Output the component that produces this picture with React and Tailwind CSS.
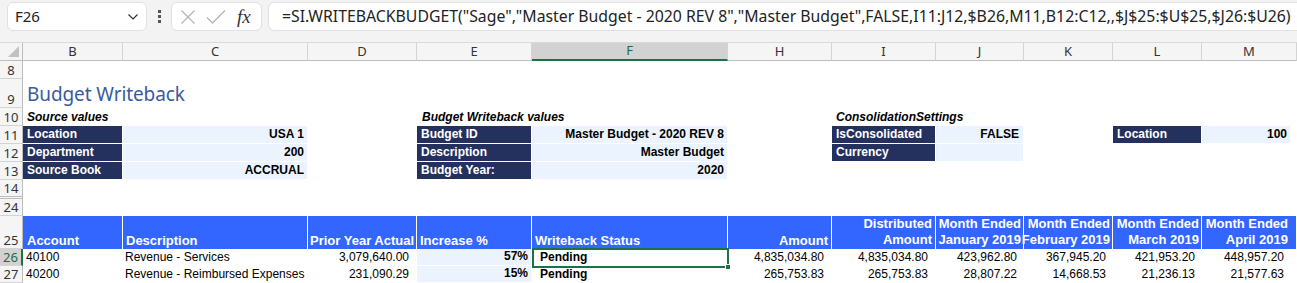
import React from "react";

const F = { fontFamily: '"Liberation Sans", Arial, sans-serif' };
const UI = { fontFamily: '"Noto Sans", "Open Sans", sans-serif' };

function RowHead({ n, h, sel, extra = "" }) {
  return (
    <div
      style={UI}
      className={
        "w-[23px] shrink-0 box-border flex items-end justify-center text-[13px] leading-[16px] border-b border-[#d4d4d4] " +
        (sel
          ? "bg-[#d2d2d2] text-[#1e6c41] border-r-2 border-r-[#1e7145] "
          : "bg-[#f5f5f5] text-[#333] border-r border-r-[#bdbdbd] ") +
        h +
        " " +
        extra
      }
    >
      {n}
    </div>
  );
}

function Cell({ w, className = "", children }) {
  return (
    <div
      style={F}
      className={
        "shrink-0 box-border flex items-end whitespace-nowrap overflow-visible text-[12px] leading-[15px] pb-[1px] " +
        w +
        " " +
        className
      }
    >
      {children}
    </div>
  );
}

const W = {
  B: "w-[100px]",
  C: "w-[185px]",
  D: "w-[109px]",
  E: "w-[115px]",
  F: "w-[196px]",
  H: "w-[104px]",
  I: "w-[104px]",
  J: "w-[88px]",
  K: "w-[89px]",
  L: "w-[89px]",
  M: "w-[95px]",
};

const dark = "bg-[#24315e] text-white font-bold text-[12.5px] pl-[4px] border-r border-b border-white";
const light = "bg-[#ebf4fe] text-black justify-end pr-[3px] border-r border-b border-white";
const lightBold = light + " font-bold text-[12.5px]";
const hdr = "bg-[#3366ff] text-white font-bold text-[13px] border-r border-white";

function Blank({ w }) {
  return <Cell w={w} />;
}

export default function App() {
  const formula =
    '=SI.WRITEBACKBUDGET("Sage","Master Budget - 2020 REV 8","Master Budget",FALSE,I11:J12,$B26,M11,B12:C12,,$J$25:$U$25,$J26:$U26)';
  const colHeads = [
    ["B", W.B],
    ["C", W.C],
    ["D", W.D],
    ["E", W.E],
    ["F", W.F],
    ["H", W.H],
    ["I", W.I],
    ["J", W.J],
    ["K", W.K],
    ["L", W.L],
    ["M", W.M],
  ];
  return (
    <div className="w-[1297px] h-[283px] overflow-hidden bg-white">
      {/* toolbar */}
      <div className="h-[43px] bg-[#f3f3f3] flex items-start pt-[2px] box-border border-b border-[#dadada]">
        <div
          style={UI}
          className="ml-[7px] w-[140px] h-[29px] box-border bg-white border border-[#e1e1e1] rounded-[6px] flex items-center justify-between pl-[7px] pr-[7px] text-[15px] text-[#222]"
        >
          <span>F26</span>
          <svg width="12" height="8" viewBox="0 0 12 8">
            <path d="M1.5 1.5 L6 6 L10.5 1.5" fill="none" stroke="#333" strokeWidth="1.2" />
          </svg>
        </div>
        <div className="ml-[11px] mt-[8px] flex flex-col gap-[2px]">
          <div className="w-[3px] h-[3px] bg-[#555]" />
          <div className="w-[3px] h-[3px] bg-[#555]" />
          <div className="w-[3px] h-[3px] bg-[#555]" />
        </div>
        <div className="ml-[10px] w-[91px] h-[29px] box-border bg-white border border-[#e1e1e1] rounded-[6px] flex items-center pl-[8px]">
          <svg width="16" height="16" viewBox="0 0 16 16">
            <path d="M1.5 1.5 L14.5 14.5 M14.5 1.5 L1.5 14.5" stroke="#b5b5b5" strokeWidth="1.3" />
          </svg>
          <svg className="ml-[10px]" width="20" height="16" viewBox="0 0 20 16">
            <path d="M1 8.5 L6.5 14 L19 1.5" fill="none" stroke="#b5b5b5" strokeWidth="1.3" />
          </svg>
          <span
            className="ml-[11px] italic text-[19px] leading-[19px] text-[#333]"
            style={{ fontFamily: '"Liberation Serif", "Times New Roman", serif' }}
          >
            fx
          </span>
        </div>
        <div
          style={UI}
          className="ml-[6px] flex-1 h-[29px] box-border bg-white border border-[#e1e1e1] border-r-0 rounded-l-[6px] flex items-center pl-[13px] text-[15.8px] text-[#222] whitespace-nowrap overflow-hidden"
        >
          {formula}
        </div>
      </div>

      {/* column headers */}
      <div className="flex h-[18px]">
        <div className="w-[23px] shrink-0 box-border bg-[#f5f5f5] border-r border-b border-[#bdbdbd] relative">
          <svg className="absolute right-[3px] bottom-[3px]" width="11" height="11" viewBox="0 0 11 11">
            <path d="M11 0 L11 11 L0 11 Z" fill="#c2c2c2" />
          </svg>
        </div>
        {colHeads.map(([k, w]) => (
          <div
            key={k}
            style={UI}
            className={
              "shrink-0 box-border flex items-center justify-center text-[13px] border-r border-[#d4d4d4] " +
              w +
              (k === "F"
                ? " bg-[#d2d2d2] text-[#1e6c41] border-b-2 border-b-[#1e7145]"
                : " bg-[#f5f5f5] text-[#333] border-b border-b-[#bdbdbd]")
            }
          >
            {k}
          </div>
        ))}
      </div>

      {/* row 8 */}
      <div className="flex h-[18px]">
        <RowHead n="8" h="h-[18px]" />
      </div>
      {/* row 9 */}
      <div className="flex h-[29px]">
        <RowHead n="9" h="h-[29px]" />
        <div
          style={UI}
          className="pl-[4px] pb-[2px] flex items-end text-[19px] leading-[24px] text-[#3a5a9c] tracking-[-0.1px]"
        >
          Budget Writeback
        </div>
      </div>
      {/* row 10 */}
      <div className="flex h-[18px]">
        <RowHead n="10" h="h-[18px]" />
        <Cell w={W.B} className="pl-[4px] font-bold italic text-[12.5px]">
          Source values
        </Cell>
        <Blank w={W.C} />
        <Blank w={W.D} />
        <Cell w={W.E} className="pl-[5px] font-bold italic text-[12.5px]">
          Budget Writeback values
        </Cell>
        <Blank w={W.F} />
        <Blank w={W.H} />
        <Cell w={W.I} className="pl-[4px] font-bold italic text-[12.5px]">
          ConsolidationSettings
        </Cell>
      </div>
      {/* row 11 */}
      <div className="flex h-[18px]">
        <RowHead n="11" h="h-[18px]" />
        <Cell w={W.B} className={dark}>Location</Cell>
        <Cell w={W.C} className={lightBold}>USA 1</Cell>
        <Blank w={W.D} />
        <Cell w={W.E} className={dark}>Budget ID</Cell>
        <Cell w={W.F} className={lightBold}>Master Budget - 2020 REV 8</Cell>
        <Blank w={W.H} />
        <Cell w={W.I} className={dark}>IsConsolidated</Cell>
        <Cell w={W.J} className={lightBold + " pr-[4px]"}>FALSE</Cell>
        <Blank w={W.K} />
        <Cell w={W.L} className={dark}>Location</Cell>
        <Cell w="w-[89px]" className={lightBold}>100</Cell>
      </div>
      {/* row 12 */}
      <div className="flex h-[18px]">
        <RowHead n="12" h="h-[18px]" />
        <Cell w={W.B} className={dark}>Department</Cell>
        <Cell w={W.C} className={lightBold}>200</Cell>
        <Blank w={W.D} />
        <Cell w={W.E} className={dark}>Description</Cell>
        <Cell w={W.F} className={lightBold}>Master Budget</Cell>
        <Blank w={W.H} />
        <Cell w={W.I} className={dark}>Currency</Cell>
        <Cell w={W.J} className={lightBold}></Cell>
      </div>
      {/* row 13 */}
      <div className="flex h-[18px]">
        <RowHead n="13" h="h-[18px]" />
        <Cell w={W.B} className={dark}>Source Book</Cell>
        <Cell w={W.C} className={lightBold}>ACCRUAL</Cell>
        <Blank w={W.D} />
        <Cell w={W.E} className={dark}>Budget Year:</Cell>
        <Cell w={W.F} className={lightBold}>2020</Cell>
      </div>
      {/* row 14 */}
      <div className="flex h-[19px]">
        <RowHead n="14" h="h-[19px]" extra="border-b-[3px] border-double border-b-[#bdbdbd]" />
      </div>
      {/* row 24 */}
      <div className="flex h-[17px]">
        <RowHead n="24" h="h-[17px]" />
      </div>
      {/* row 25 header */}
      <div className="flex h-[33px]">
        <RowHead n="25" h="h-[33px]" />
        <Cell w={W.B} className={hdr + " pl-[4px]"}>Account</Cell>
        <Cell w={W.C} className={hdr + " pl-[3px]"}>Description</Cell>
        <Cell w={W.D} className={hdr + " pl-[2px]"}>Prior Year Actual</Cell>
        <Cell w={W.E} className={hdr + " pl-[3px]"}>Increase %</Cell>
        <Cell w={W.F} className={hdr + " pl-[3px]"}>Writeback Status</Cell>
        <Cell w={W.H} className={hdr + " justify-end pr-[3px]"}>Amount</Cell>
        <Cell w={W.I} className={hdr + " justify-end text-right pr-[3px] leading-[16px]"}>
          Distributed<br />Amount
        </Cell>
        <Cell w={W.J} className={hdr + " justify-end text-right pr-[2px] leading-[16px]"}>
          Month Ended<br />January 2019
        </Cell>
        <Cell w={W.K} className={hdr + " justify-end text-right pr-[2px] leading-[16px]"}>
          Month Ended<br />February 2019
        </Cell>
        <Cell w={W.L} className={hdr + " justify-end text-right pr-[2px] leading-[16px]"}>
          Month Ended<br />March 2019
        </Cell>
        <Cell w={W.M} className={hdr + " justify-end text-right pr-[8px] leading-[16px]"}>
          Month Ended<br />April 2019
        </Cell>
      </div>
      {/* row 26 */}
      <div className="flex h-[17px]">
        <RowHead n="26" h="h-[17px]" sel />
        <Cell w={W.B} className="pl-[3px]">40100</Cell>
        <Cell w={W.C} className="pl-[2px]">Revenue - Services</Cell>
        <Cell w={W.D} className="justify-end pr-[8px]">3,079,640.00</Cell>
        <Cell w={W.E} className={lightBold}>57%</Cell>
        <div className={"shrink-0 relative " + W.F}>
          <Cell w="w-full h-full" className="pl-[8px] font-bold text-[12.5px]">
            Pending
          </Cell>
          <div className="absolute left-0 top-[-1px] right-[-1px] bottom-[-2px] border-2 border-[#1e7145]" />
          <div className="absolute right-[-3px] bottom-[-4px] w-[6px] h-[6px] bg-[#1e7145] border border-white" />
        </div>
        <Cell w={W.H} className="justify-end pr-[8px]">4,835,034.80</Cell>
        <Cell w={W.I} className="justify-end pr-[8px]">4,835,034.80</Cell>
        <Cell w={W.J} className="justify-end pr-[7px]">423,962.80</Cell>
        <Cell w={W.K} className="justify-end pr-[7px]">367,945.20</Cell>
        <Cell w={W.L} className="justify-end pr-[7px]">421,953.20</Cell>
        <Cell w={W.M} className="justify-end pr-[13px]">448,957.20</Cell>
      </div>
      {/* row 27 */}
      <div className="flex h-[17px]">
        <RowHead n="27" h="h-[17px]" />
        <Cell w={W.B} className="pl-[3px]">40200</Cell>
        <Cell w={W.C} className="pl-[2px]">Revenue - Reimbursed Expenses</Cell>
        <Cell w={W.D} className="justify-end pr-[8px]">231,090.29</Cell>
        <Cell w={W.E} className={lightBold}>15%</Cell>
        <Cell w={W.F} className="pl-[8px] font-bold text-[12.5px]">Pending</Cell>
        <Cell w={W.H} className="justify-end pr-[8px]">265,753.83</Cell>
        <Cell w={W.I} className="justify-end pr-[8px]">265,753.83</Cell>
        <Cell w={W.J} className="justify-end pr-[7px]">28,807.22</Cell>
        <Cell w={W.K} className="justify-end pr-[7px]">14,668.53</Cell>
        <Cell w={W.L} className="justify-end pr-[7px]">21,236.13</Cell>
        <Cell w={W.M} className="justify-end pr-[13px]">21,577.63</Cell>
      </div>
    </div>
  );
}
